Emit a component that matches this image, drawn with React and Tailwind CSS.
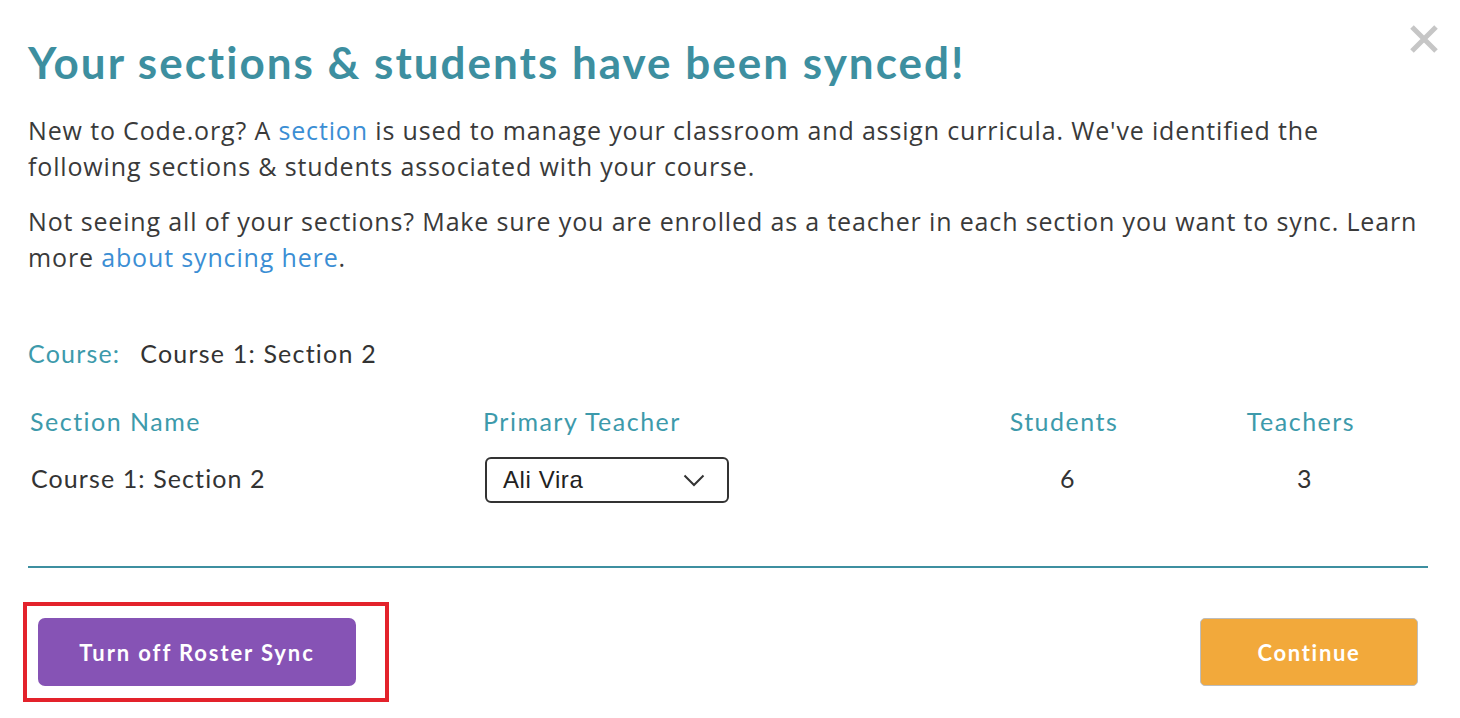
import React from "react";

export default function App() {
  const head = { fontFamily: "Lato, 'Open Sans', sans-serif" };
  return (
    <div className="relative w-[1460px] h-[718px] bg-white overflow-hidden" style={{ fontFamily: "'Open Sans', 'Noto Sans', sans-serif" }}>
      <button className="absolute left-[1406px] top-[22px] w-[36px] h-[34px] flex items-center justify-center">
        <svg width="32" height="32" viewBox="0 0 32 32">
          <path d="M4 4 L28 28 M28 4 L4 28" stroke="#c6c6c6" strokeWidth="5" strokeLinecap="butt" />
        </svg>
      </button>
      <div className="pl-[28px] pr-[32px] pt-[36px]">
        <h1 className="text-[44px] leading-[52px] font-bold text-[#3d8fa0] tracking-[2px] whitespace-nowrap" style={head}>
          Your sections &amp; students have been synced!
        </h1>
        <p className="mt-[24px] text-[25px] leading-[36px] text-[#3a3a3a] tracking-[0.85px]">
          New to Code.org? A <span className="text-[#3b8ed4]">section</span> is used to manage your classroom and assign curricula. We've identified the following sections &amp; students associated with your course.
        </p>
        <p className="mt-[19px] text-[25px] leading-[36px] text-[#3a3a3a] tracking-[0.85px]">
          Not seeing all of your sections? Make sure you are enrolled as a teacher in each section you want to sync. Learn more <span className="text-[#3b8ed4]">about syncing here</span>.
        </p>
        <div className="mt-[60px] flex items-center text-[25px] leading-[36px] tracking-[1.2px]" style={head}>
          <span className="text-[#3d9aab]">Course:</span>
          <span className="ml-[20px] text-[#333]">Course 1: Section 2</span>
        </div>
        <div className="mt-[32px] grid grid-cols-[455px_455px_252px_222px] text-[25px] leading-[36px] tracking-[1.5px]" style={head}>
          <div className="pl-[2px] text-[#3d9aab]">Section Name</div>
          <div className="text-[#3d9aab]">Primary Teacher</div>
          <div className="text-center text-[#3d9aab]">Students</div>
          <div className="text-center text-[#3d9aab]">Teachers</div>
          <div className="mt-[18px] h-[46px] flex items-center pl-[3px] pb-[4px] text-[#333] tracking-[1.1px]">Course 1: Section 2</div>
          <div className="mt-[18px]">
            <div className="ml-[2px] w-[244px] h-[46px] border-2 border-[#333] rounded-[6px] flex items-center justify-between pl-[16px] pr-[22px] text-[#222]" style={{ fontFamily: "'Liberation Sans', Arial, sans-serif" }}>
              <span className="text-[24px] tracking-[0.6px] font-medium">Ali Vira</span>
              <svg width="22" height="13" viewBox="0 0 22 13">
                <path d="M1.5 1.5 L11 11 L20.5 1.5" fill="none" stroke="#333" strokeWidth="2" />
              </svg>
            </div>
          </div>
          <div className="mt-[18px] h-[46px] flex items-center justify-center pb-[4px] pl-[8px] text-[#333]">6</div>
          <div className="mt-[18px] h-[46px] flex items-center justify-center pb-[4px] pl-[8px] text-[#333]">3</div>
        </div>
        <div className="mt-[63px] h-[2px] bg-[#3d8fa0]" />
        <div className="mt-[34px] flex justify-between items-start">
          <div className="-ml-[5px] border-[4px] border-[#e3222b] pl-[11px] pr-[29px] py-[12px]">
            <button className="w-[318px] h-[68px] rounded-[7px] bg-[#8653b5] text-white font-bold text-[22px] tracking-[1.9px]" style={head}>
              Turn off Roster Sync
            </button>
          </div>
          <button className="mt-[16px] mr-[10px] w-[218px] h-[68px] rounded-[5px] bg-[#f2a93b] border border-[#bdbdbd] text-white font-bold text-[22px] tracking-[1.7px]" style={head}>
            Continue
          </button>
        </div>
      </div>
    </div>
  );
}
